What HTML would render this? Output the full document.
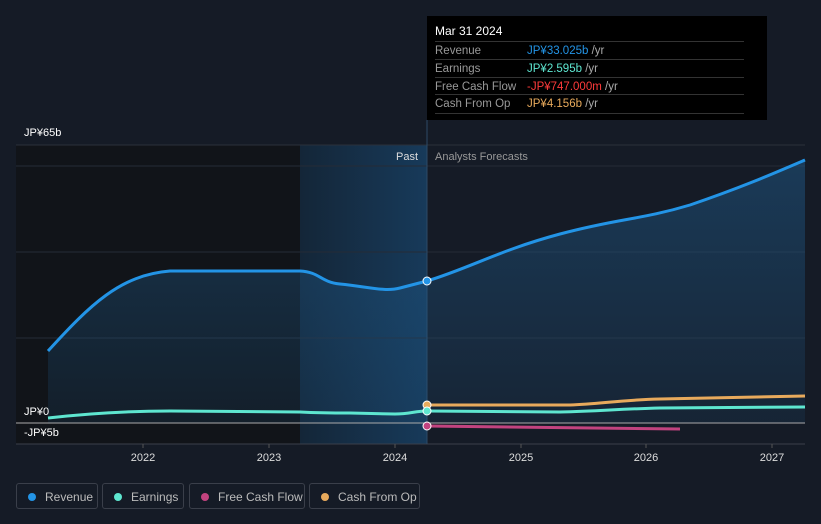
<!DOCTYPE html>
<html><head><style>
body{margin:0;width:821px;height:524px;background:#151b26;overflow:hidden;font-family:"Liberation Sans",sans-serif;position:relative}
.tt{position:absolute;left:427px;top:16px;width:340px;height:104px;background:#000;color:#fff;font-size:11.5px}
.tt .h{position:absolute;left:8px;top:8px;font-size:12px}
.row{position:absolute;left:8px;width:309px;height:18px;border-top:1px solid #333;line-height:18px;color:#999}
.row span{position:absolute;left:92px}
.lg{position:absolute;top:483px;height:26px;border:1px solid #3a3f4a;border-radius:3px;color:#bbb;font-size:12px;line-height:26px;box-sizing:border-box}
.lg i{position:absolute;left:11px;top:9px;width:8px;height:8px;border-radius:50%}
</style></head><body>
<svg width="821" height="524" style="position:absolute;left:0;top:0">
<defs><linearGradient id="g" x1="0" x2="0" y1="0" y2="1"><stop offset="0" stop-color="#1f5a8a" stop-opacity=".5"/><stop offset="1" stop-color="#1f5a8a" stop-opacity=".15"/></linearGradient>
<linearGradient id="h" x1="0" x2="1" y1="0" y2="0"><stop offset="0" stop-color="#142638"/><stop offset="1" stop-color="#173a5a"/></linearGradient></defs>
<rect x="16" y="145" width="411" height="299" fill="#111419"/>
<rect x="300" y="145" width="127" height="299" fill="url(#h)"/>
<line x1="16" y1="145" x2="805" y2="145" stroke="#2a303b"/>
<line x1="16" y1="166" x2="805" y2="166" stroke="#252b36"/>
<line x1="16" y1="252" x2="805" y2="252" stroke="#252b36"/>
<line x1="16" y1="338" x2="805" y2="338" stroke="#252b36"/>
<line x1="16" y1="444" x2="805" y2="444" stroke="#3a3f4a"/>
<line x1="427" y1="120" x2="427" y2="444" stroke="#2d4a66"/>
<path d="M48,351 C90,305 120,275 170,271 L300,271 C320,272 320,282 340,284 C370,287 385,292 400,288 L427,281 C470,268 500,250 560,234 C620,218 640,220 690,205 C740,188 770,175 805,160 L805,423 L48,423Z" fill="url(#g)"/>
<path d="M48,351 C90,305 120,275 170,271 L300,271 C320,272 320,282 340,284 C370,287 385,292 400,288 L427,281 C470,268 500,250 560,234 C620,218 640,220 690,205 C740,188 770,175 805,160" fill="none" stroke="#2394e6" stroke-width="3"/>
<line x1="16" y1="423" x2="805" y2="423" stroke="#aaa" stroke-width="1"/>
<path d="M427,405 L570,405 C600,404 620,400 660,399 L805,396" fill="none" stroke="#e8aa5c" stroke-width="3"/>
<path d="M48,418 C100,412 140,411 170,411 L300,412 C320,413 330,413 350,413 L395,414 C410,414 415,411 427,411 L560,412 C600,411 620,409 660,408 L805,407" fill="none" stroke="#5ee6d0" stroke-width="3"/>
<path d="M427,426 L680,429" fill="none" stroke="#c2437f" stroke-width="3"/>
<circle cx="427" cy="281" r="4" fill="#2394e6" stroke="#fff"/>
<circle cx="427" cy="405" r="4" fill="#e8aa5c" stroke="#fff"/>
<circle cx="427" cy="411" r="4" fill="#5ee6d0" stroke="#fff"/>
<circle cx="427" cy="426" r="4" fill="#c2437f" stroke="#fff"/>
<g fill="#fff" font-size="11"><text x="24" y="136">JP¥65b</text><text x="24" y="415">JP¥0</text><text x="24" y="436">-JP¥5b</text>
<text x="396" y="160" fill="#ddd">Past</text><text x="435" y="160" fill="#999">Analysts Forecasts</text></g>
<g fill="#ddd" font-size="11" text-anchor="middle"><text x="143" y="461">2022</text><text x="269" y="461">2023</text><text x="395" y="461">2024</text><text x="521" y="461">2025</text><text x="646" y="461">2026</text><text x="772" y="461">2027</text></g>
<g stroke="#555"><line x1="143" y1="444" x2="143" y2="448"/><line x1="269" y1="444" x2="269" y2="448"/><line x1="395" y1="444" x2="395" y2="448"/><line x1="521" y1="444" x2="521" y2="448"/><line x1="646" y1="444" x2="646" y2="448"/><line x1="772" y1="444" x2="772" y2="448"/></g>
</svg>
<div class="tt"><div class="h">Mar 31 2024</div>
<div class="row" style="top:25px">Revenue<span style="color:#2394e6">JP¥33.025b <b style="color:#aaa;font-weight:normal">/yr</b></span></div>
<div class="row" style="top:43px">Earnings<span style="color:#5ee6d0">JP¥2.595b <b style="color:#aaa;font-weight:normal">/yr</b></span></div>
<div class="row" style="top:61px">Free Cash Flow<span style="color:#ff3b3b">-JP¥747.000m <b style="color:#aaa;font-weight:normal">/yr</b></span></div>
<div class="row" style="top:78px;border-bottom:1px solid #333">Cash From Op<span style="color:#e8aa5c">JP¥4.156b <b style="color:#aaa;font-weight:normal">/yr</b></span></div>
</div>
<div class="lg" style="left:16px;width:82px"><i style="background:#2394e6"></i><span style="position:absolute;left:28px">Revenue</span></div>
<div class="lg" style="left:102px;width:82px"><i style="background:#5ee6d0"></i><span style="position:absolute;left:28px">Earnings</span></div>
<div class="lg" style="left:189px;width:116px"><i style="background:#c2437f"></i><span style="position:absolute;left:28px">Free Cash Flow</span></div>
<div class="lg" style="left:309px;width:111px"><i style="background:#e8aa5c"></i><span style="position:absolute;left:28px">Cash From Op</span></div>
</body></html>
